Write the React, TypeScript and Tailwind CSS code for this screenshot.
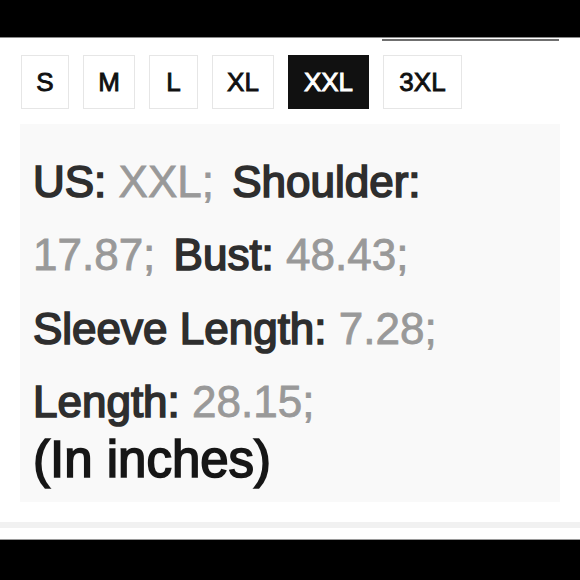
import React from "react";

const sizes = [
  { s: "S", w: "w-[48px]" },
  { s: "M", w: "w-[52px]" },
  { s: "L", w: "w-[49px]" },
  { s: "XL", w: "w-[62px]" },
  { s: "XXL", w: "w-[81px]" },
  { s: "3XL", w: "w-[79px]" },
];
const selected = "XXL";

const lines: { label: string; value: string }[][] = [
  [
    { label: "US:", value: "XXL;" },
    { label: "Shoulder:", value: "" },
  ],
  [
    { label: "", value: "17.87;" },
    { label: "Bust:", value: "48.43;" },
  ],
  [{ label: "Sleeve Length:", value: "7.28;" }],
  [{ label: "Length:", value: "28.15;" }],
];

export default function App() {
  return (
    <div className="flex h-[580px] w-[580px] flex-col bg-white font-['Liberation_Sans',Arial,sans-serif]">
      {/* top bar */}
      <div className="h-[38px] shrink-0 border-b border-[#8a8a8a] bg-black" />
      <div className="flex justify-end pr-[21px] pt-[1px]">
        <div className="h-[2px] w-[177px] bg-[#6f6f6f]" />
      </div>

      {/* size picker */}
      <div className="mt-[14px] flex gap-[14px] px-[21px]">
        {sizes.map(({ s, w }) => {
          const active = s === selected;
          return (
            <div
              key={s}
              className={
                active
                  ? `flex h-[54px] ${w} items-center justify-center border border-[#111] bg-[#111] text-[26px] text-white [-webkit-text-stroke:0.9px_#fff]`
                  : `flex h-[54px] ${w} items-center justify-center border border-[#e6e6e6] bg-white text-[26px] text-[#111] [-webkit-text-stroke:0.9px_#111]`
              }
            >
              {s}
            </div>
          );
        })}
      </div>

      {/* measurements */}
      <div className="mx-5 mt-[15px] bg-[#f9f9f9] pb-[20px] pl-[13px] pt-[21px]">
        {lines.map((line, i) => (
          <div key={i} className="text-[44px] leading-[73.3px] whitespace-nowrap">
            {line.map((part, j) => (
              <React.Fragment key={j}>
                {part.label && (
                  <span className="text-[#2e2e2e] [-webkit-text-stroke:1.7px_#2e2e2e]">
                    {part.label}{" "}
                  </span>
                )}
                {part.value && (
                  <span className="mr-[6px] text-[#999] [-webkit-text-stroke:0.8px_#999]">
                    {part.value}{" "}
                  </span>
                )}
              </React.Fragment>
            ))}
          </div>
        ))}
        <div className="text-[51px] leading-[44px] text-[#161616] [-webkit-text-stroke:1.7px_#161616]">
          (In inches)
        </div>
      </div>

      <div className="mt-[20px] h-[6px] shrink-0 bg-[#f1f1f1]" />
      <div className="mt-[11px] flex-1 border-t border-[#9a9a9a] bg-black" />
    </div>
  );
}
